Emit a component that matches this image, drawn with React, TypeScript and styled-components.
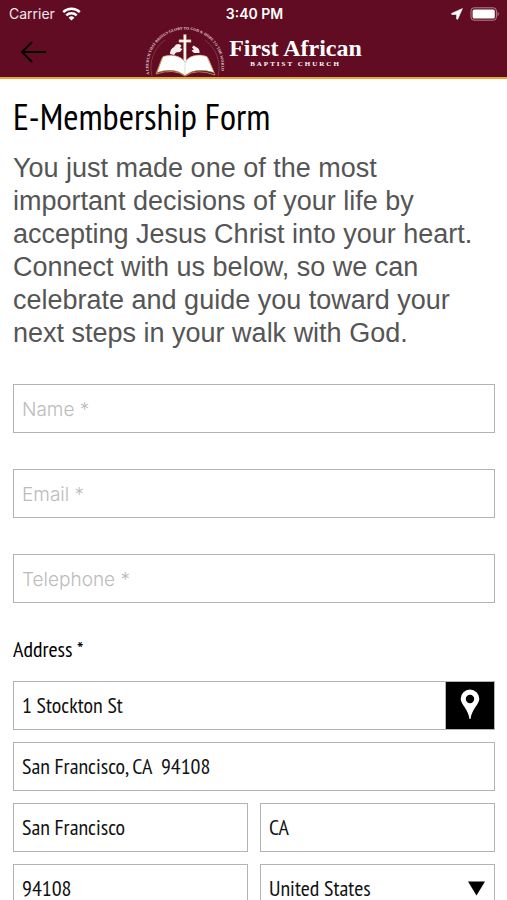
import React from "react";
import styled, { createGlobalStyle } from "styled-components";

const narrow = `"PT Sans Narrow", "Liberation Sans Narrow", "Open Sans Condensed", "Noto Sans", sans-serif`;
const sans = `"Liberation Sans", Arial, sans-serif`;

const GlobalStyle = createGlobalStyle`
  *, *::before, *::after { box-sizing: border-box; }
  body { margin: 0; background: #fff; }
`;

const Screen = styled.div`
  display: flex;
  flex-direction: column;
  height: 100vh;
  font-family: ${sans};
`;

const Header = styled.header`
  flex: none;
  background: #610c22;
  border-bottom: 2px solid #eaa92c;
  color: #fff;
`;

const StatusBar = styled.div`
  display: grid;
  grid-template-columns: 1fr auto 1fr;
  align-items: center;
  height: 26px;
  padding: 2px 7px 0 9px;
  font-family: Inter, sans-serif;
  font-size: 14px;
  line-height: 16px;
`;

const StatusGroup = styled.div<{ $end?: boolean }>`
  display: flex;
  align-items: center;
  justify-content: ${(p) => (p.$end ? "flex-end" : "flex-start")};
  gap: 7px;
  color: #f3e6ea;
`;

const Clock = styled.time`
  font-weight: 600;
`;

const NavBar = styled.nav`
  display: grid;
  grid-template-columns: 1fr auto 1fr;
  height: 51px;
`;

const BackButton = styled.button`
  display: flex;
  align-items: center;
  justify-self: start;
  padding: 0 20px;
  border: 0;
  background: none;
  color: #000;
`;

const Brand = styled.div`
  display: flex;
  gap: 4px;
`;

const BrandText = styled.div`
  display: flex;
  flex-direction: column;
  align-items: center;
  padding-top: 10px;
  font-family: "Liberation Serif", serif;
  font-weight: 700;
`;

const BrandName = styled.span`
  font-size: 24px;
  line-height: 24px;
`;

const BrandSub = styled.span`
  font-size: 7px;
  line-height: 8px;
  letter-spacing: 2px;
`;

const Content = styled.main`
  flex: 1;
  min-height: 0;
  overflow-y: auto;
  scrollbar-width: none;
  padding: 15px 12px 12px 13px;
`;

const Title = styled.h1`
  margin: 0;
  font-family: ${narrow};
  font-size: 37px;
  font-weight: 400;
  line-height: 44px;
`;

const Intro = styled.p`
  margin: 14px 0 34px;
  color: #555;
  font-size: 27px;
  line-height: 33px;
`;

const Form = styled.form`
  display: flex;
  flex-direction: column;
  gap: 36px;
`;

const AddressGroup = styled.fieldset`
  display: grid;
  grid-template-columns: 1fr 1fr;
  gap: 12px;
  min-width: 0;
  margin: 0;
  padding: 0;
  border: 0;
`;

const Legend = styled.legend`
  margin-bottom: 22px;
  padding: 0;
  font-family: ${narrow};
  font-size: 22px;
  line-height: 20px;
`;

const Field = styled.input<{ $wide?: boolean }>`
  width: 100%;
  min-width: 0;
  height: 49px;
  grid-column: ${(p) => (p.$wide ? "1 / -1" : "auto")};
  padding: 0 8px 2px;
  border: 1px solid #b3b3b3;
  border-radius: 0;
  background: #fff;
  color: #111;
  font-family: ${narrow};
  font-size: 22px;

  &::placeholder {
    color: #bbb;
    opacity: 1;
    font-family: Inter, sans-serif;
    font-size: 19px;
    font-weight: 300;
  }
`;

const LocateRow = styled.div`
  display: flex;
  grid-column: 1 / -1;
`;

const LocateButton = styled.button`
  display: flex;
  flex: none;
  align-items: center;
  justify-content: center;
  width: 50px;
  height: 49px;
  margin-left: -1px;
  padding: 0 0 2px;
  border: 1px solid #b3b3b3;
  background: #000;
`;

const SelectBox = styled.div`
  display: grid;
  align-items: center;
  border: 1px solid #b3b3b3;

  & > * { grid-area: 1 / 1; }
  & > svg { justify-self: end; margin-right: 9px; pointer-events: none; }
`;

const Select = styled.select`
  appearance: none;
  width: 100%;
  height: 47px;
  padding: 0 32px 2px 8px;
  border: 0;
  border-radius: 0;
  background: #fff;
  color: #111;
  font-family: ${narrow};
  font-size: 22px;
`;

const Wifi = () => (
  <svg width="19" height="14" viewBox="0 0 19 14" fill="none" stroke="#fff" strokeWidth="2.5" aria-hidden="true">
    <path d="M1.2 5.2A12 12 0 0 1 17.8 5.2" />
    <path d="M4.3 8.4A7.5 7.5 0 0 1 14.7 8.4" />
    <path d="M9.5 13.6L6.6 10.7A4.2 4.2 0 0 1 12.4 10.7Z" fill="#fff" stroke="none" />
  </svg>
);

const LocationArrow = () => (
  <svg width="12" height="12" viewBox="0 0 12 12" fill="#fff" stroke="#fff" strokeWidth=".6" strokeLinejoin="round" aria-hidden="true">
    <path d="M11.4.6L.6 5.4Q.2 6.3 1 6.4H5.6V11Q6 11.8 6.7 11.2Z" />
  </svg>
);

const Battery = () => (
  <svg width="30" height="14" viewBox="0 0 30 14" aria-hidden="true">
    <rect x="1" y=".8" width="25.4" height="12.4" rx="3" fill="none" stroke="#b58490" />
    <rect x="2.6" y="2.4" width="22.2" height="9.2" rx="1.6" fill="#fff" />
    <path d="M27.6 4.6Q30 7 27.6 9.4Z" fill="#b58490" />
  </svg>
);

const BackArrow = () => (
  <svg width="27" height="22" viewBox="0 0 27 22" fill="none" stroke="currentColor" strokeWidth="2" strokeLinecap="round" strokeLinejoin="round" aria-hidden="true">
    <path d="M11.5 1.5L2 11L11.5 20.5M2 11H25" />
  </svg>
);

const Emblem = () => (
  <svg width="80" height="51" viewBox="0 0 80 51" role="img" aria-label="Church emblem">
    <defs>
      <path id="motto" d="M4.5 48.5A36.5 36.5 0 1 1 75.5 48.5" />
    </defs>
    <path d="M7 50A34 34 0 0 1 20 14M60 14A34 34 0 0 1 73 50" fill="none" stroke="#8e5060" strokeWidth=".6" />
    <text fill="#e6d0d5" fontFamily="Liberation Serif, serif" fontSize="3.9" fontWeight="700">
      <textPath href="#motto">A CHURCH THAT BRINGS GLORY TO GOD &amp; HOPE TO THE WORLD</textPath>
    </text>
    <path d="M17 32L11 48Q29 42 40 50Q52 42 70 49L63 32" fill="#2c1420" stroke="#d79a63" strokeWidth=".8" />
    <path d="M18 30.5Q32 26.500 40 35.500Q48 26 62 30.500L69 46.500Q51 41 40 49.500Q29 41 12 46.500Z" fill="#fff" stroke="#d79a63" strokeWidth=".6" />
    <path d="M40 35.500V49" stroke="#d9c3c8" strokeWidth=".6" />
    <path d="M25 28Q25 23 29 21L31 18.500Q35 17 36.500 20L35 22L37.500 23L35 26L31 26.500L29 29Z" fill="#f6eeee" />
    <path d="M54.500 27Q55 22.500 51 21L48.500 19.500L47 21.500L49 23.500L46.500 24.500L49 27Z" fill="#f6eeee" />
    <path d="M34 13.800H38.600V8.500H41.200V13.800H46V16.200H41.200V35.500L40 36L38.600 34.500V16.200H34Z" fill="#fff" stroke="#d79a63" strokeWidth=".5" />
  </svg>
);

const Pin = () => (
  <svg width="20" height="31" viewBox="0 0 20 31" aria-hidden="true">
    <path fill="#fff" fillRule="evenodd" d="M10 .5A9.300 9.300 0 0 0 .7 9.800C.7 15.500 8 19.500 9.500 30H10.500C12 19.500 19.300 15.500 19.300 9.800A9.300 9.300 0 0 0 10 .5ZM10 5.800A4.200 4.200 0 1 1 10 14.200A4.200 4.200 0 1 1 10 5.800Z" />
  </svg>
);

const Caret = () => (
  <svg width="17" height="15" viewBox="0 0 17 15" aria-hidden="true">
    <path d="M0 .5H17L8.500 14.500Z" />
  </svg>
);

export default function App() {
  return (
    <Screen>
      <GlobalStyle />
      <Header>
        <StatusBar>
          <StatusGroup>
            <span>Carrier</span>
            <Wifi />
          </StatusGroup>
          <Clock>3:40 PM</Clock>
          <StatusGroup $end>
            <LocationArrow />
            <Battery />
          </StatusGroup>
        </StatusBar>
        <NavBar>
          <BackButton type="button" aria-label="Back">
            <BackArrow />
          </BackButton>
          <Brand>
            <Emblem />
            <BrandText>
              <BrandName>First African</BrandName>
              <BrandSub>BAPTIST CHURCH</BrandSub>
            </BrandText>
          </Brand>
        </NavBar>
      </Header>
      <Content>
        <Title>E-Membership Form</Title>
        <Intro>
          You just made one of the most important decisions of your life by accepting Jesus Christ into your
          heart. Connect with us below, so we can celebrate and guide you toward your next steps in your walk
          with God.
        </Intro>
        <Form>
          <Field type="text" placeholder="Name *" aria-label="Name" required />
          <Field type="email" placeholder="Email *" aria-label="Email" required />
          <Field type="tel" placeholder="Telephone *" aria-label="Telephone" required />
          <AddressGroup>
            <Legend>Address *</Legend>
            <LocateRow>
              <Field aria-label="Address line 1" defaultValue="1 Stockton St" />
              <LocateButton type="button" aria-label="Use my location">
                <Pin />
              </LocateButton>
            </LocateRow>
            <Field $wide aria-label="Address line 2" defaultValue={"San Francisco, CA  94108"} />
            <Field aria-label="City" defaultValue="San Francisco" />
            <Field aria-label="State" defaultValue="CA" />
            <Field aria-label="Zip code" defaultValue="94108" />
            <SelectBox>
              <Select aria-label="Country" defaultValue="United States">
                <option>United States</option>
                <option>Canada</option>
              </Select>
              <Caret />
            </SelectBox>
          </AddressGroup>
        </Form>
      </Content>
    </Screen>
  );
}
